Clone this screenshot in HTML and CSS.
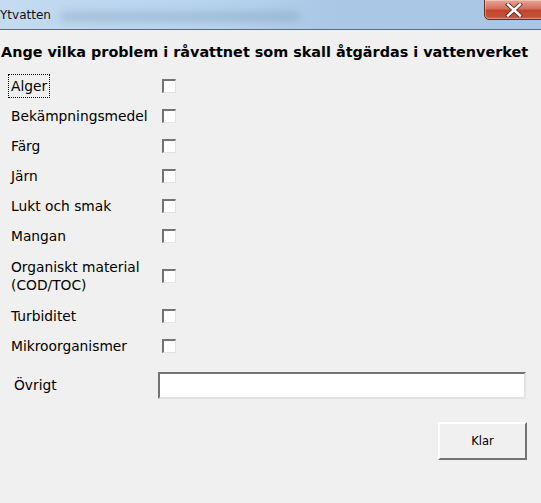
FILE: index.html
```html
<!DOCTYPE html>
<html lang="sv">
<head>
<meta charset="utf-8">
<title>Ytvatten</title>
<link rel="stylesheet" href="styles.css">
</head>
<body>
<div class="window">
  <div class="titlebar">
    <span class="title">Ytvatten</span>
    <span class="blur"></span>
    <button class="close" aria-label="Stäng">
      <svg width="20" height="14" viewBox="0 0 20 14">
        <path d="M4 1.5 L16 12.5 M16 1.5 L4 12.5" stroke="#5a2a20" stroke-width="4.2" stroke-linecap="square"/>
        <path d="M4 1.5 L16 12.5 M16 1.5 L4 12.5" stroke="#ffffff" stroke-width="2.4" stroke-linecap="square"/>
      </svg>
    </button>
  </div>
  <div class="content">
    <h1 class="heading">Ange vilka problem i råvattnet som skall åtgärdas i vattenverket</h1>
    <div class="list">
      <div class="row"><span class="label"><span class="focus">Alger</span></span><span class="check"></span></div>
      <div class="row"><span class="label">Bekämpningsmedel</span><span class="check"></span></div>
      <div class="row"><span class="label">Färg</span><span class="check"></span></div>
      <div class="row"><span class="label">Järn</span><span class="check"></span></div>
      <div class="row"><span class="label">Lukt och smak</span><span class="check"></span></div>
      <div class="row"><span class="label">Mangan</span><span class="check"></span></div>
      <div class="row tall"><span class="label">Organiskt material<br>(COD/TOC)</span><span class="check"></span></div>
      <div class="row"><span class="label">Turbiditet</span><span class="check"></span></div>
      <div class="row"><span class="label">Mikroorganismer</span><span class="check"></span></div>
    </div>
    <div class="other">
      <span class="other-label">Övrigt</span>
      <span class="textbox"></span>
    </div>
    <div class="actions">
      <button class="btn">Klar</button>
    </div>
  </div>
</div>
</body>
</html>
```
FILE: styles.css
```css
html, body {
  margin: 0;
  padding: 0;
  background: #f0f0f0;
}
body {
  width: 541px;
  height: 503px;
  overflow: hidden;
  font-family: "DejaVu Sans", sans-serif;
  color: #000;
}
.window {
  width: 541px;
  height: 503px;
  background: #f0f0f0;
}
.titlebar {
  position: relative;
  height: 29px;
  border-bottom: 1px solid #5d6b7b;
  background: linear-gradient(90deg, #c4dbf1 0%, #b7d3ee 40%, #aac8e6 62%, #a9c6e4 100%);
  display: flex;
  align-items: center;
  overflow: hidden;
}
.title {
  font-size: 12px;
  color: #111;
  position: relative;
  z-index: 1;
}
.blur {
  position: absolute;
  left: 60px;
  top: 12px;
  width: 240px;
  height: 9px;
  border-radius: 5px;
  background: rgba(95, 125, 155, 0.3);
  filter: blur(4px);
}
.close {
  position: absolute;
  right: -8px;
  top: -1px;
  width: 65px;
  height: 21px;
  border: 1px solid #6b2b22;
  border-radius: 0 0 5px 5px;
  background: linear-gradient(180deg, #e9a595 0%, #d4705c 45%, #c0432d 55%, #cc5a3e 100%);
  display: flex;
  align-items: center;
  justify-content: flex-start;
  padding: 0 0 0 19px;
  box-shadow: inset 0 0 0 1px rgba(255,255,255,0.35);
}
.heading {
  margin: 0;
  padding: 13px 0 0 1px;
  font-size: 14.4px;
  font-weight: bold;
  line-height: 18px;
  white-space: nowrap;
}
.list {
  display: flex;
  flex-direction: column;
  padding-top: 10px;
}
.row {
  display: flex;
  align-items: center;
  height: 30px;
}
.row.tall {
  height: 50px;
}
.label {
  width: 152px;
  padding-left: 11px;
  font-size: 13.8px;
  line-height: 18px;
  box-sizing: border-box;
}
.focus {
  display: inline-block;
  margin-left: -2px;
  padding: 2px 2px;
  outline: 1px dotted #000;
}
.check {
  width: 14px;
  height: 14px;
  box-sizing: border-box;
  margin-left: 10px;
  background: #fff;
  border-top: 2px solid #737373;
  border-left: 2px solid #737373;
  border-right: 1px solid #e3e3e3;
  border-bottom: 1px solid #e3e3e3;
}
.other {
  display: flex;
  align-items: center;
  margin-top: 10px;
  height: 28px;
}
.other-label {
  width: 144px;
  margin-left: 14px;
  font-size: 13.8px;
}
.textbox {
  width: 368px;
  height: 27px;
  box-sizing: border-box;
  background: #fff;
  border-top: 2px solid #737373;
  border-left: 2px solid #737373;
  border-right: 2px solid #e3e3e3;
  border-bottom: 2px solid #e3e3e3;
}
.actions {
  display: flex;
  justify-content: flex-end;
  padding: 23px 14px 0 0;
}
.btn {
  width: 89px;
  height: 38px;
  box-sizing: border-box;
  background: #f0f0f0;
  font-family: "DejaVu Sans", sans-serif;
  font-size: 11.5px;
  color: #000;
  border-top: 2px solid #ffffff;
  border-left: 2px solid #ffffff;
  border-right: 2px solid #737373;
  border-bottom: 2px solid #737373;
  padding: 0;
}
```
